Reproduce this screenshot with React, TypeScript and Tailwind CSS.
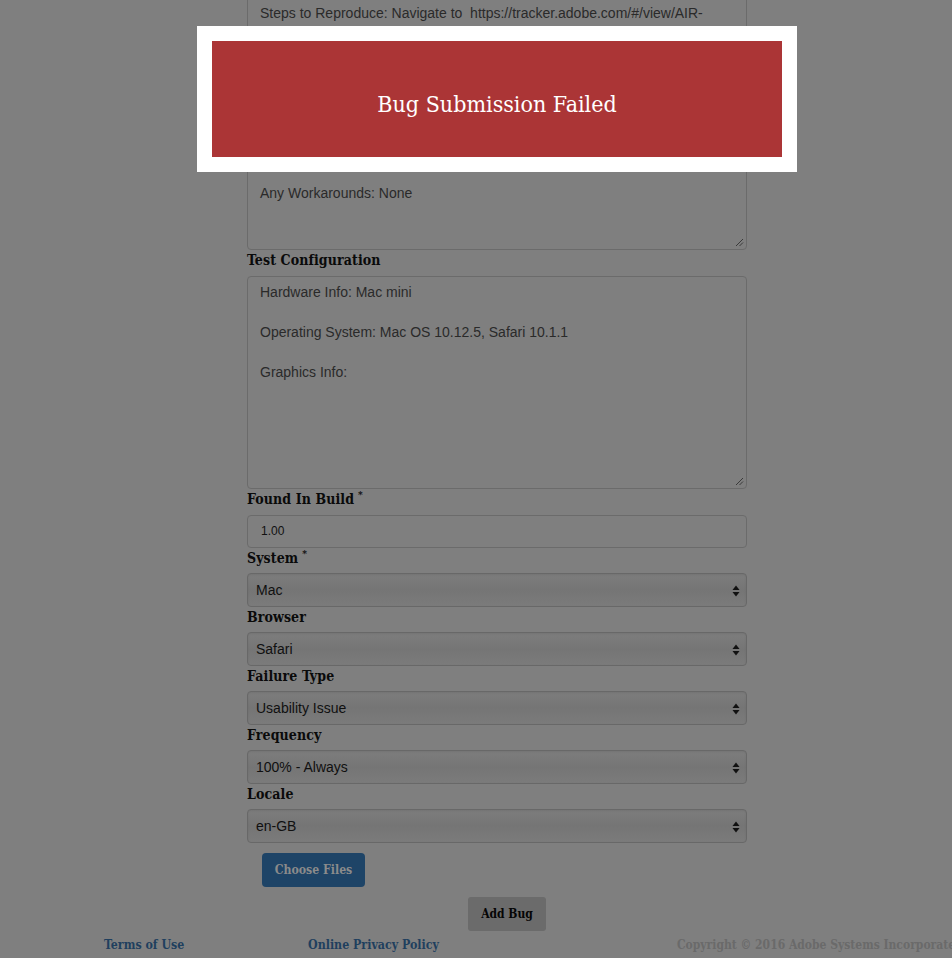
import React from "react";

const slab = { fontFamily: '"DejaVu Serif Condensed", "DejaVu Serif", serif' };
const sans = { fontFamily: '"Liberation Sans", Arial, sans-serif' };

function Grip() {
  return (
    <svg className="absolute right-[2px] bottom-[2px]" width="9" height="9" viewBox="0 0 9 9">
      <path d="M1 8 L8 1 M4.5 8 L8 4.5" stroke="#3a3a3a" strokeWidth="1" />
    </svg>
  );
}

function Arrows() {
  return (
    <svg className="absolute right-[6px] top-[11px]" width="8" height="12" viewBox="0 0 8 12">
      <path d="M4 0.5 L7.5 5 L0.5 5 Z" fill="#111" />
      <path d="M4 11.5 L7.5 7 L0.5 7 Z" fill="#111" />
    </svg>
  );
}

function Label({ text, req }: { text: string; req?: boolean }) {
  return (
    <div className="h-[20px] leading-[20px] text-[14px] font-bold text-[#0a0a0a] tracking-[0.1px]" style={slab}>
      {text}
      {req && <span className="text-[10px] ml-[4px] relative top-[-6px]">*</span>}
    </div>
  );
}

function Select({ value }: { value: string }) {
  return (
    <div
      className="relative mt-[5px] h-[34px] rounded-[4px] border border-[#686868] bg-gradient-to-b from-[#7d7d7d] via-[#757575] to-[#7b7b7b] shadow-[inset_0_1px_2px_rgba(0,0,0,0.08)] pl-[8px] leading-[32px] text-[14px] text-[#101010]"
      style={sans}
    >
      {value}
      <Arrows />
    </div>
  );
}

export default function App() {
  return (
    <div className="relative w-[952px] h-[958px] overflow-hidden bg-[#7f7f7f]">
      <div className="ml-[247px] w-[500px] flex flex-col">
        <div
          className="relative -mt-[10px] h-[260px] rounded-[4px] border border-[#6b6b6b] px-[12px] pt-[12px] text-[14px] leading-[20px] text-[#2a2a2a] whitespace-pre-wrap"
          style={sans}
        >
          {"Steps to Reproduce: Navigate to  https://tracker.adobe.com/#/view/AIR-\n4198762\n\nExpected Result: Bug is submitted\n\nActual Result: Error is shown\n\nReproducibility: Always\n\nAny Workarounds: None"}
          <Grip />
        </div>
        <Label text="Test Configuration" />
        <div
          className="relative mt-[6px] h-[213px] rounded-[4px] border border-[#6b6b6b] px-[12px] pt-[5px] text-[14px] leading-[20px] text-[#2a2a2a] whitespace-pre-wrap"
          style={sans}
        >
          {"Hardware Info: Mac mini\n\nOperating System: Mac OS 10.12.5, Safari 10.1.1\n\nGraphics Info:"}
          <Grip />
        </div>
        <Label text="Found In Build" req />
        <div
          className="mt-[6px] h-[33px] rounded-[4px] border border-[#6b6b6b] pl-[13px] leading-[31px] text-[12px] text-[#111]"
          style={sans}
        >
          1.00
        </div>
        <Label text="System" req />
        <Select value="Mac" />
        <Label text="Browser" />
        <Select value="Safari" />
        <Label text="Failure Type" />
        <Select value="Usability Issue" />
        <Label text="Frequency" />
        <Select value="100% - Always" />
        <Label text="Locale" />
        <Select value="en-GB" />
        <div className="mt-[10px] ml-[15px]">
          <div
            className="w-[103px] h-[34px] rounded-[4px] bg-[#1e4467] text-[#8b8b8b] text-[12.2px] font-bold leading-[34px] text-center"
            style={slab}
          >
            Choose Files
          </div>
        </div>
        <div className="mt-[10px] ml-[221px]">
          <div
            className="w-[78px] h-[34px] rounded-[3px] bg-[#6b6b6b] text-[#050505] text-[12px] font-bold leading-[34px] text-center"
            style={slab}
          >
            Add Bug
          </div>
        </div>
      </div>
      <div className="flex mt-[5px] text-[12.3px] font-bold leading-[18px] whitespace-nowrap" style={slab}>
        <div className="shrink-0 ml-[104px] w-[204px] text-[#1f3f5e]">Terms of Use</div>
        <div className="shrink-0 w-[369px] text-[#1f3f5e]">Online Privacy Policy</div>
        <div className="shrink-0 text-[#6a6a6a] text-[12px]">Copyright © 2016 Adobe Systems Incorporated</div>
      </div>

      <div className="absolute left-[197px] top-[26px] w-[600px] h-[146px] bg-white p-[15px]">
        <div className="w-full h-full bg-[#ab3536] flex items-center justify-center pt-[11px]">
          <span className="text-white text-[23px] leading-none" style={slab}>
            Bug Submission Failed
          </span>
        </div>
      </div>
    </div>
  );
}
